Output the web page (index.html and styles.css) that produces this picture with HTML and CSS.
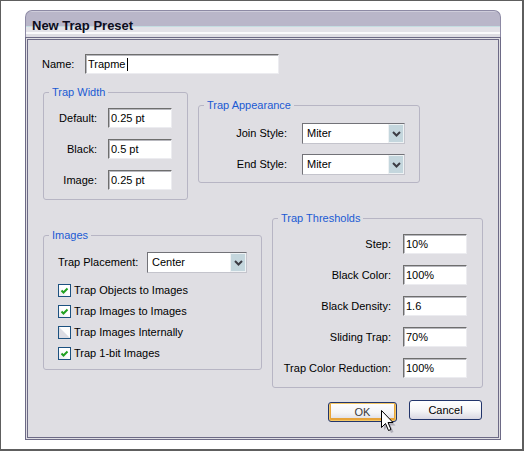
FILE: index.html
```html
<!DOCTYPE html>
<html>
<head>
<meta charset="utf-8">
<title>New Trap Preset</title>
<link rel="stylesheet" href="styles.css">
</head>
<body>
<div class="frame">
  <div class="dialog">
    <div class="titlebar">New Trap Preset</div>
    <div class="panel">
      <div class="name-row">
        <span class="lbl name-lbl">Name:</span>
        <div class="field name-field">Trapme<span class="caret"></span></div>
      </div>

      <div class="row row2">
        <div class="group g-width">
          <div class="legend">Trap Width</div>
          <div class="rows">
            <div class="frow"><span class="lbl">Default:</span><div class="field">0.25 pt</div></div>
            <div class="frow"><span class="lbl">Black:</span><div class="field">0.5 pt</div></div>
            <div class="frow"><span class="lbl">Image:</span><div class="field">0.25 pt</div></div>
          </div>
        </div>
        <div class="group g-appear">
          <div class="legend">Trap Appearance</div>
          <div class="rows">
            <div class="frow"><span class="lbl">Join Style:</span>
              <div class="select"><span class="sel-text">Miter</span><span class="sel-btn"><svg width="9" height="6" viewBox="0 0 9 6"><polyline points="1,1 4.5,4.5 8,1" fill="none" stroke="#3c3c44" stroke-width="2"/></svg></span></div>
            </div>
            <div class="frow"><span class="lbl">End Style:</span>
              <div class="select"><span class="sel-text">Miter</span><span class="sel-btn"><svg width="9" height="6" viewBox="0 0 9 6"><polyline points="1,1 4.5,4.5 8,1" fill="none" stroke="#3c3c44" stroke-width="2"/></svg></span></div>
            </div>
          </div>
        </div>
      </div>

      <div class="row row3">
        <div class="group g-images">
          <div class="legend">Images</div>
          <div class="frow prow"><span class="lbl">Trap Placement:</span>
            <div class="select"><span class="sel-text">Center</span><span class="sel-btn"><svg width="9" height="6" viewBox="0 0 9 6"><polyline points="1,1 4.5,4.5 8,1" fill="none" stroke="#3c3c44" stroke-width="2"/></svg></span></div>
          </div>
          <div class="checks">
            <div class="check"><span class="box on"><svg width="11" height="11" viewBox="0 0 11 11"><polyline points="2.5,5.5 4.5,7.5 8.5,3.5" fill="none" stroke="#21a121" stroke-width="2"/></svg></span>Trap Objects to Images</div>
            <div class="check"><span class="box on"><svg width="11" height="11" viewBox="0 0 11 11"><polyline points="2.5,5.5 4.5,7.5 8.5,3.5" fill="none" stroke="#21a121" stroke-width="2"/></svg></span>Trap Images to Images</div>
            <div class="check"><span class="box off"></span>Trap Images Internally</div>
            <div class="check"><span class="box on"><svg width="11" height="11" viewBox="0 0 11 11"><polyline points="2.5,5.5 4.5,7.5 8.5,3.5" fill="none" stroke="#21a121" stroke-width="2"/></svg></span>Trap 1-bit Images</div>
          </div>
        </div>
        <div class="group g-thresh">
          <div class="legend">Trap Thresholds</div>
          <div class="rows">
            <div class="frow"><span class="lbl">Step:</span><div class="field">10%</div></div>
            <div class="frow"><span class="lbl">Black Color:</span><div class="field">100%</div></div>
            <div class="frow"><span class="lbl">Black Density:</span><div class="field">1.6</div></div>
            <div class="frow"><span class="lbl">Sliding Trap:</span><div class="field">70%</div></div>
            <div class="frow"><span class="lbl">Trap Color Reduction:</span><div class="field">100%</div></div>
          </div>
        </div>
      </div>

      <div class="buttons">
        <div class="btn btn-ok">OK
          <svg class="cursor" width="17" height="25" viewBox="0 0 17 25">
            <path d="M3 3 V20 L7 16 L10 23 L12.5 22 L9.5 15.5 H14.5 Z" fill="#8a8898" opacity="0.55"/>
            <path d="M0.5 0.5 V17.5 L4.5 13.5 L7.5 20.5 L10 19.5 L7 12.5 H12 Z" fill="#fff" stroke="#000" stroke-width="1" stroke-linejoin="miter"/>
          </svg>
        </div>
        <div class="btn btn-cancel">Cancel</div>
      </div>
    </div>
  </div>
</div>
</body>
</html>
```

FILE: styles.css
```css
* { box-sizing: border-box; }
html, body { margin: 0; background: #fff; }
body {
  font-family: "Liberation Sans", Arial, sans-serif;
  font-size: 11px;
  line-height: 13px;
  color: #000;
}
.frame {
  width: 524px;
  height: 451px;
  border-style: solid;
  border-color: #5e5e5e;
  border-width: 1px 2px 2px 1px;
  padding: 9px 0 0 24px;
}
.dialog { width: 476px; }
.titlebar {
  height: 27px;
  border: 1px solid #8d8aa5;
  border-bottom: 0;
  border-radius: 7px 7px 0 0;
  padding: 7px 0 0 6px;
  font-weight: bold;
  font-size: 13px;
  line-height: 15px;
  color: #0c0c1c;
  background: linear-gradient(to bottom,
    #cfcddb 0, #cfcddb 2px,
    #b9b6c9 2px, #b9b6c9 16px,
    #c4dde1 16px, #c4dde1 17px,
    #e3e2e8 17px, #e3e2e8 22px,
    #fafafc 22px, #fafafc 24px,
    #dedde3 24px);
  background-origin: border-box;
}
.panel {
  height: 403px;
  border: 3px double #6d6a86;
  background: #dfdee3;
  padding: 14px 0 0 14px;
}
.name-row { display: flex; align-items: center; height: 20px; }
.name-lbl { width: 43px; }
.field {
  height: 20px;
  width: 64px;
  background: #fff;
  border: 1px solid;
  border-color: #6e6e6e #ececf0 #ececf0 #6e6e6e;
  box-shadow: inset 1px 1px 0 #b8b8be;
  padding-left: 2px;
  line-height: 18px;
  flex: none;
}
.name-field { width: 194px; display: flex; align-items: center; }
.caret { display: inline-block; width: 1px; height: 13px; background: #000; margin-left: 1px; }

.row { display: flex; align-items: flex-start; }
.row2 { margin-top: 18px; }
.row3 { margin-top: 18px; }

.group {
  border: 1px solid #b7b5c4;
  border-radius: 3px;
  flex: none;
}
.legend {
  margin: -7px 0 0 5px;
  padding: 0 3px;
  width: max-content;
  height: 13px;
  line-height: 13px;
  background: #dfdee3;
  color: #1b5ad3;
}
.rows { display: flex; flex-direction: column; }
.frow { display: flex; align-items: center; }
.lbl { flex: none; }
.frow .lbl { text-align: right; }

.g-width { margin-left: 1px; width: 145px; height: 108px; }
.g-width .rows { margin-top: 9px; gap: 11px; }
.g-width .lbl { width: 53px; margin-right: 11px; }

.g-appear { margin-left: 10px; margin-top: 13px; width: 222px; height: 78px; }
.g-appear .rows { margin-top: 11px; gap: 10px; }
.g-appear .lbl { width: 88px; margin-right: 15px; }
.g-appear .select { width: 103px; }

.select {
  display: flex;
  height: 21px;
  background: #fff;
  border: 1px solid;
  border-color: #727278 #c4c4cc #c4c4cc #727278;
  flex: none;
}
.sel-text { flex: 1; padding-left: 4px; line-height: 19px; }
.sel-btn {
  width: 16px;
  background: #c4d6dd;
  border: 1px solid #eef2f4;
  display: flex;
  align-items: center;
  justify-content: center;
}

.g-images { margin-left: 1px; margin-top: 17px; width: 219px; height: 135px; }
.prow { margin-top: 10px; padding-left: 14px; }
.prow .lbl { width: 89px; text-align: left; }
.prow .select { width: 100px; }
.checks { margin-top: 7px; padding-left: 14px; }
.check { display: flex; align-items: center; height: 21px; }
.box {
  width: 13px;
  height: 13px;
  border: 1px solid #1c5180;
  margin-right: 3px;
  flex: none;
  display: flex;
}
.box.on { background: linear-gradient(to top right, #e8e8ee 0%, #fff 55%); }
.box.off { background: linear-gradient(to top right, #dcdce3 46%, #fdfdfd 54%); }

.g-thresh { margin-left: 10px; width: 211px; height: 170px; }
.g-thresh .rows { margin-top: 9px; gap: 11px; }
.g-thresh .lbl { width: 118px; margin-right: 12px; }

.buttons { display: flex; align-items: flex-start; margin-top: 12px; }
.btn {
  height: 20px;
  border: 1px solid #22356b;
  border-radius: 3px;
  background: linear-gradient(to bottom, #ffffff 0%, #f4f4f6 55%, #d9d8e2 100%);
  text-align: center;
  line-height: 18px;
  flex: none;
}
.btn-ok {
  position: relative;
  margin-left: 286px;
  margin-top: 2px;
  width: 69px;
  color: #3a3a3a;
  box-shadow: inset 0 0 0 1px #f3c766, inset 0 -1px 0 2px #e7a43a;
}
.btn-cancel { margin-left: 12px; width: 73px; }
.cursor { position: absolute; left: 52px; top: 7px; }
```
